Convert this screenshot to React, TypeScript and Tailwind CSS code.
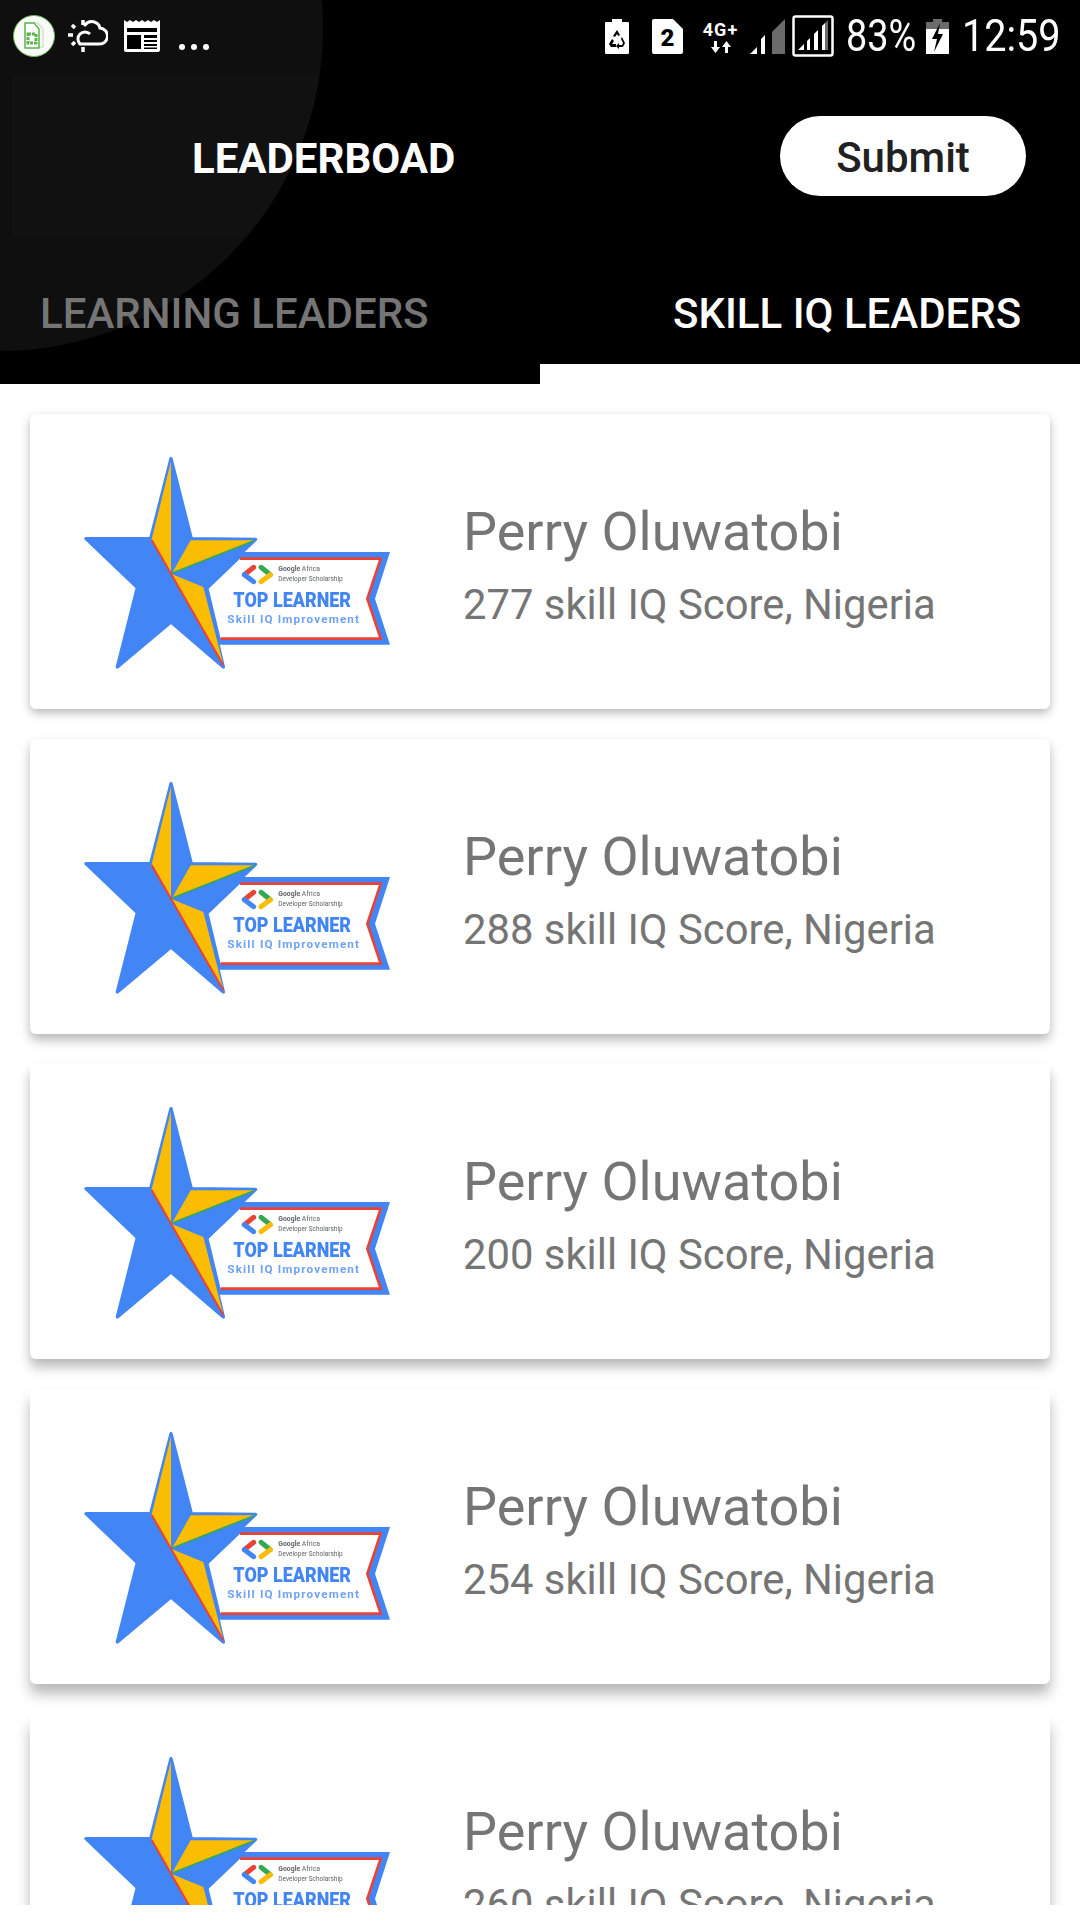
import React from 'react';

const learners = [
    { id: 1, score: 277, shadow: 'shadow-[0_4px_10px_rgba(0,0,0,0.28)]' },
    { id: 2, score: 288, shadow: 'shadow-[0_6px_11px_rgba(0,0,0,0.28)]' },
    { id: 3, score: 200, shadow: 'shadow-[0_8px_12px_rgba(0,0,0,0.28)]' },
    { id: 4, score: 254, shadow: 'shadow-[0_10px_13px_rgba(0,0,0,0.28)]' },
    { id: 5, score: 260, shadow: 'shadow-[0_12px_14px_rgba(0,0,0,0.28)]' },
];

// Top learner badge, drawn in 3x units of its 350x260 box
const Badge = () => (
    <svg className="w-[350px] h-[260px] shrink-0 blur-[0.6px]" viewBox="0 0 1050 780">
        <polygon points="530,360 990,360 945,500 990,638 470,638 430,470" fill="#4285f4" />
        <polygon points="540,380 962,380 922,500 962,620 482,620 446,470" fill="#ffffff" />
        <polyline points="540,380 962,380 922,500 962,620 482,620" fill="none" stroke="#ea4335" strokeWidth="8" />
        <polygon
            points="333,80 394,320 587,322 434,467 490,705 333,570 172,705 232,467 78,320 272,320"
            fill="#4285f4"
            stroke="#4285f4"
            strokeWidth="10"
            strokeLinejoin="round"
        />
        <polygon points="333,88 275,322 333,425" fill="#fbbc04" />
        <polygon points="392,325 582,325 335,425" fill="#fbbc04" />
        <polygon points="333,425 430,465 490,698" fill="#fbbc04" />
        <line x1="335" y1="424" x2="582" y2="326" stroke="#34a853" strokeWidth="5" />
        <polyline points="275,324 333,425 490,700" fill="none" stroke="#ea4335" strokeWidth="6" />
        <g fill="none" strokeWidth="15" strokeLinecap="round">
            <line x1="581" y1="406" x2="553" y2="428" stroke="#ea4335" />
            <line x1="553" y1="428" x2="581" y2="449" stroke="#4285f4" />
            <line x1="603" y1="406" x2="631" y2="428" stroke="#34a853" />
            <line x1="631" y1="428" x2="603" y2="449" stroke="#fbbc04" />
        </g>
        <g fill="#5f6368" fontFamily="Roboto, sans-serif" fontSize="22">
            <text x="655" y="417" textLength="125" lengthAdjust="spacingAndGlyphs">
                <tspan fontWeight="700">Google</tspan> Africa
            </text>
            <text x="655" y="448" textLength="193" lengthAdjust="spacingAndGlyphs">Developer Scholarship</text>
        </g>
        <text x="520" y="525" fill="#4285f4" fontFamily="Roboto, sans-serif" fontWeight="900" fontSize="60" textLength="353" lengthAdjust="spacingAndGlyphs">TOP LEARNER</text>
        <text x="502" y="574" fill="#6ea2f7" fontFamily="Roboto, sans-serif" fontWeight="700" fontSize="35" textLength="395" lengthAdjust="spacing">Skill IQ Improvement</text>
    </svg>
);

const StatusLeft = () => (
    <div className="flex items-center">
        <div className="w-[42px] h-[42px] rounded-full bg-[#fafafa] border border-[#66bb55] flex items-center justify-center">
            <svg className="w-[22px] h-[28px]" viewBox="0 0 22 28">
                <path d="M7 1h8l5 6v18H7" fill="none" stroke="#cfe8c8" strokeWidth="1.5" />
                <path d="M2 1h9l5 6v19H2z" fill="#fff" stroke="#5cb34a" strokeWidth="1.5" />
                <rect x="5" y="12" width="8" height="9" fill="none" stroke="#5cb34a" strokeWidth="3" strokeDasharray="3 1" />
            </svg>
        </div>
        <svg className="w-[40px] h-[32px] ml-[13px]" viewBox="0 0 40 32" fill="none" stroke="#fff">
            <path d="M12 24h19a8 8 0 0 0 1-16 8.5 8.5 0 0 0-15-3" strokeWidth="3" strokeLinecap="round" />
            <path d="M22 14a7 7 0 1 0-10 10" strokeWidth="3" />
            <path d="M15 0v5M15 27v5M0 15h5M4 5l3 3M4 25l3-3" strokeWidth="3.5" />
        </svg>
        <svg className="w-[36px] h-[32px] ml-[16px]" viewBox="0 0 36 32">
            <path d="M0 0l3 2 3-2 3 2 3-2 3 2 3-2 3 2 3-2 3 2 3-2 3 2 3-2v30a2 2 0 0 1-2 2H2a2 2 0 0 1-2-2z" fill="#fff" />
            <rect x="3" y="8" width="30" height="21" fill="#000" />
            <rect x="3" y="12" width="30" height="3" fill="#fff" />
            <rect x="17" y="15" width="3" height="14" fill="#fff" />
            <path d="M20 18h13v2H20zM20 22h13v2H20zM20 26h13v1.500H20z" fill="#fff" />
        </svg>
        <svg className="w-[30px] h-[6px] ml-[19px] mt-[22px]" viewBox="0 0 30 6" fill="#fff">
            <circle cx="3" cy="3" r="3" />
            <circle cx="15" cy="3" r="3" />
            <circle cx="27" cy="3" r="3" />
        </svg>
    </div>
);

const StatusRight = () => (
    <div className="flex items-center pr-[20px]">
        <svg className="w-[24px] h-[35px]" viewBox="0 0 24 35">
            <path d="M7 0h10v3h6a1 1 0 0 1 1 1v30a1 1 0 0 1-1 1H1a1 1 0 0 1-1-1V4a1 1 0 0 1 1-1h6z" fill="#fff" />
            <path d="M12 11l3 5-2 1-1-2-2 3-2-1zM7 20l-3 5 2 3h5v-3H7l2-3zM17 18l3 6-2 4h-4v2l-3-3 3-3v2h3l1-2-2-4z" fill="#000" />
        </svg>
        <svg className="w-[31px] h-[35px] ml-[23px]" viewBox="0 0 31 35">
            <path d="M2 0h19l10 10v23a2 2 0 0 1-2 2H2a2 2 0 0 1-2-2V2a2 2 0 0 1 2-2z" fill="#fff" />
            <text x="15.500" y="27" fontFamily="Roboto, sans-serif" fontWeight="900" fontSize="24" textAnchor="middle" fill="#000">2</text>
        </svg>
        <div className="w-[37px] h-[35px] ml-[19px] flex flex-col items-center">
            <span className="text-white font-bold text-[18px] leading-[15px] tracking-[1px] mt-[3px] font-['Roboto',sans-serif]">4G+</span>
            <svg className="w-[20px] h-[12px] mt-[4px]" viewBox="0 0 20 12" fill="#fff">
                <path d="M3 0h3v6h3l-4.500 6L0 6h3zM15.500 0L20 6h-3v6h-3V6h-3z" />
            </svg>
        </div>
        <svg className="w-[35px] h-[35px] ml-[11px]" viewBox="0 0 35 35">
            <path d="M0 35l7-7v7zM11 20l4-4v19h-4z" fill="#fff" />
            <path d="M22 13L35 0v35H22z" fill="#6b6b6b" />
        </svg>
        <svg className="w-[42px] h-[42px] ml-[7px]" viewBox="0 0 42 42">
            <rect x="1.500" y="1.500" width="39" height="39" rx="2" fill="#000" stroke="#fff" strokeWidth="2.5" />
            <path d="M6 35l6-6v6zM15 26l3-3v12h-3zM22 19l4-4v20h-4z" fill="#fff" />
            <path d="M30 11l3-3v27h-3z" fill="#fff" />
            <path d="M33 8l3-3v30h-3z" fill="#6b6b6b" />
        </svg>
        <div className="w-[70px] ml-[12px] text-white text-[44px] leading-[44px] font-['Roboto',sans-serif]">
            <span className="inline-block origin-left scale-x-[0.86] whitespace-nowrap">83%</span>
        </div>
        <svg className="w-[23px] h-[35px] ml-[10px]" viewBox="0 0 23 35">
            <path d="M7 0h9v3h7v7H0V3h7z" fill="#6b6b6b" />
            <path d="M0 10h23v25H0z" fill="#fff" />
            <path d="M14 4L6 20h5l-3 13 9-18h-5z" fill="#000" />
        </svg>
        <div className="w-[98px] ml-[13px] text-white text-[44px] leading-[44px] font-['Roboto',sans-serif]">
            <span className="inline-block origin-left scale-x-[0.9] whitespace-nowrap">12:59</span>
        </div>
    </div>
);

const LearnerCard = ({ score, shadow }: { score: number; shadow: string }) => (
    <div className={`h-[295px] shrink-0 bg-white rounded-[6px] flex items-center pl-[30px] ${shadow}`}>
        <Badge />
        <div className="ml-[53px] pt-[10px] text-[#757575]">
            <p className="text-[54px] leading-[60px]">Perry Oluwatobi</p>
            <p className="text-[41.8px] leading-[52px] mt-[17px]">{score} skill IQ Score, Nigeria</p>
        </div>
    </div>
);

export default function App() {
    return (
        <div className="w-[1080px] h-[1920px] bg-white overflow-hidden font-['Roboto',sans-serif]">
            <div className="h-[1905px] overflow-hidden">
                {/* Header */}
                <div className="relative overflow-hidden h-[364px] bg-black">
                    <div className="absolute left-[-323px] top-[-295px] w-[646px] h-[646px] rounded-full overflow-hidden bg-[#0f0f0f]">
                        <div className="absolute left-[335px] top-[370px] w-[400px] h-[163px] bg-[#111111]" />
                    </div>
                    <div className="relative">
                        <div className="h-[72px] flex items-center justify-between pl-[13px]">
                            <StatusLeft />
                            <StatusRight />
                        </div>
                        <div className="h-[168px] flex items-center justify-between pl-[192px] pr-[54px]">
                            <h1 className="text-[42px] font-bold text-white mt-[4px]">LEADERBOAD</h1>
                            <button className="w-[246px] h-[80px] rounded-full bg-white text-[#212121] text-[42px] font-medium pt-[2px]">Submit</button>
                        </div>
                        <div className="grid grid-cols-2 pt-[50px]">
                            <div className="pl-[40px]">
                                <span className="text-[42px] leading-[48px] font-medium text-[#757575]">LEARNING LEADERS</span>
                            </div>
                            <div className="pl-[133px]">
                                <span className="text-[42px] leading-[48px] font-medium text-white">SKILL IQ LEADERS</span>
                            </div>
                        </div>
                    </div>
                </div>
                <div className="w-[540px] h-[20px] bg-black" />

                {/* List */}
                <div className="flex flex-col gap-[30px] pt-[30px] px-[30px]">
                    {learners.map((learner) => (
                        <LearnerCard key={learner.id} score={learner.score} shadow={learner.shadow} />
                    ))}
                </div>
            </div>
        </div>
    );
}
